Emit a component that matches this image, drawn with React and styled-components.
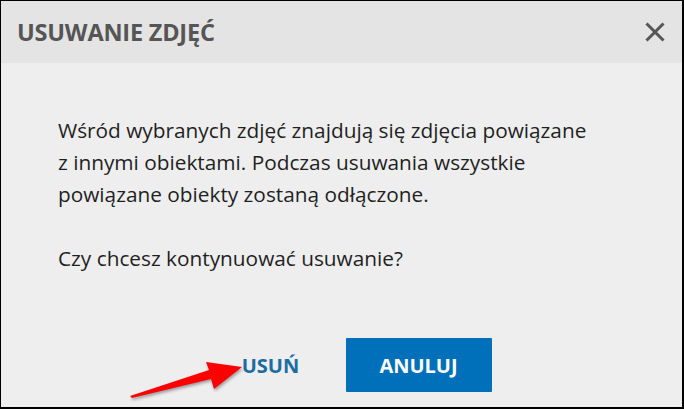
import React from 'react';
import styled, { createGlobalStyle } from 'styled-components';

const GlobalStyle = createGlobalStyle`
  html, body {
    margin: 0;
    padding: 0;
    background: #ffffff;
  }
  * {
    box-sizing: border-box;
  }
`;

const Dialog = styled.div`
  position: relative;
  width: 684px;
  height: 409px;
  display: flex;
  flex-direction: column;
  border-style: solid;
  border-color: #000;
  border-width: 1px 2px 2px 1px;
  background: #eeeeee;
  font-family: "Open Sans", "Liberation Sans", sans-serif;
  overflow: hidden;
`;

const Header = styled.div`
  height: 62px;
  flex-shrink: 0;
  display: flex;
  align-items: center;
  justify-content: space-between;
  padding: 0 17px 0 16px;
  background: #e4e4e4;
`;

const Title = styled.h1`
  margin: 0;
  font-size: 23.5px;
  font-weight: 700;
  color: #555555;
  letter-spacing: -0.2px;
`;

const CloseButton = styled.button`
  border: 0;
  padding: 0;
  background: none;
  width: 20px;
  height: 20px;
  display: flex;
  cursor: pointer;
`;

const Body = styled.div`
  flex: 1;
  display: flex;
  flex-direction: column;
  padding-top: 51px;
`;

const Message = styled.div`
  padding-left: 57px;
`;

const Paragraph = styled.p`
  margin: 0 0 32px;
  font-size: 20.8px;
  line-height: 32px;
  color: #1f1f1f;
`;

const Footer = styled.div`
  display: flex;
  justify-content: center;
  gap: 8px;
  margin-top: 32px;
`;

const Button = styled.button`
  width: 146px;
  height: 54px;
  border: 0;
  border-radius: 1px;
  padding: ${p => (p.$primary ? '0' : '0 0 0 12px')};
  font-family: inherit;
  font-size: 20px;
  font-weight: 700;
  letter-spacing: 0;
  cursor: pointer;
  background: ${p => (p.$primary ? '#0170ba' : 'transparent')};
  color: ${p => (p.$primary ? '#ffffff' : '#1b6ba4')};
`;

const Arrow = styled.svg`
  position: absolute;
  left: 119px;
  top: 349px;
  width: 130px;
  height: 52px;
  filter: drop-shadow(1px 2px 1.5px rgba(0, 0, 0, 0.35));
`;

const CloseIcon = () => (
  <svg width="20" height="20" viewBox="0 0 20 20">
    <path d="M1.5 1.5 L18.5 18.5 M18.5 1.5 L1.5 18.5" stroke="#555" strokeWidth="3" strokeLinecap="butt" />
  </svg>
);

export default function App() {
  return (
    <>
      <GlobalStyle />
      <Dialog>
        <Header>
          <Title>USUWANIE ZDJĘĆ</Title>
          <CloseButton aria-label="Zamknij">
            <CloseIcon />
          </CloseButton>
        </Header>
        <Body>
          <Message>
            <Paragraph>
              Wśród wybranych zdjęć znajdują się zdjęcia powiązane<br />
              z innymi obiektami. Podczas usuwania wszystkie<br />
              powiązane obiekty zostaną odłączone.
            </Paragraph>
            <Paragraph>Czy chcesz kontynuować usuwanie?</Paragraph>
          </Message>
          <Footer>
            <Button>USUŃ</Button>
            <Button $primary>ANULUJ</Button>
          </Footer>
        </Body>
        <Arrow viewBox="0 0 130 52">
          <polygon points="10,46 89,20 86,12 122,17 94,39 91,29 12,48" fill="#ff0000" />
        </Arrow>
      </Dialog>
    </>
  );
}
